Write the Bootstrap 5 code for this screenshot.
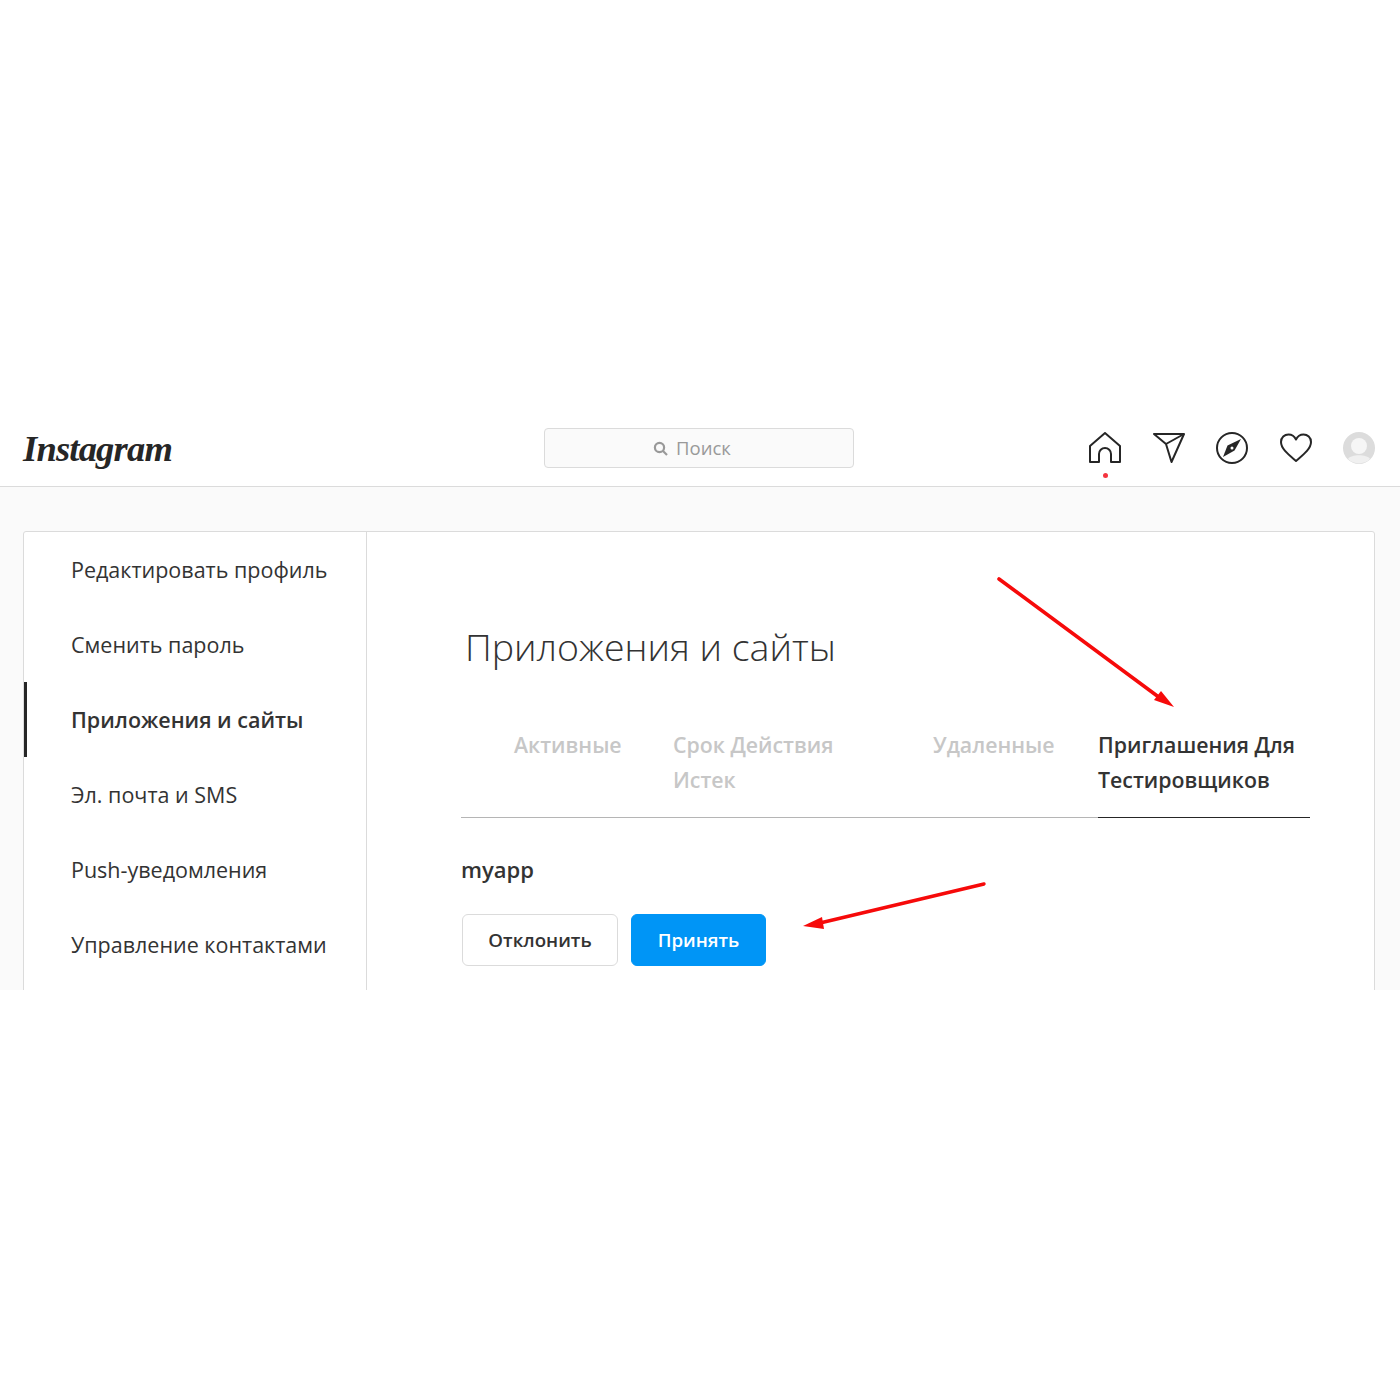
<!DOCTYPE html>
<html lang="ru">
<head>
  <meta charset="UTF-8" />
  <meta name="viewport" content="width=device-width, initial-scale=1.0" />
  <title>Instagram</title>
  <link href="https://cdn.jsdelivr.net/npm/bootstrap@5.3.0/dist/css/bootstrap.min.css" rel="stylesheet">
  <style>
    body {
      background: #fff;
      font-family: "Open Sans", "Noto Sans", sans-serif;
      color: #262626;
    }
    .shot {
      position: relative;
      margin-top: 416px;
      height: 574px;
      overflow: hidden;
    }
    .top-bar {
      height: 71px;
      padding: 0 25px 0 23px;
      background: #fff;
      border-bottom: 1px solid #dbdbdb;
    }
    .top-side {
      flex: 1 1 0;
    }
    .logo-text {
      font-family: "Liberation Serif", serif;
      font-style: italic;
      font-weight: 700;
      font-size: 36.5px;
      letter-spacing: -0.8px;
      line-height: 1;
      color: #262626;
      margin-top: -3px;
    }
    .search-box {
      width: 310px;
      height: 40px;
      margin-top: -6px;
      padding-right: 14px;
      background: #fafafa;
      border: 1px solid #dbdbdb;
      border-radius: 4px;
      color: #999;
      font-size: 18.5px;
    }
    .top-icons {
      gap: 31.5px;
      margin-top: -6px;
    }
    .top-icons svg { display: block; }
    .home-wrap { position: relative; }
    .home-dot {
      position: absolute;
      left: 14px;
      top: 41px;
      width: 5px;
      height: 5px;
      border-radius: 50%;
      background: #f5343f;
    }
    .page-bg {
      background: #fafafa;
      padding: 44px 25px 0 23px;
      height: 503px;
    }
    .settings-box {
      height: 600px;
      background: #fff;
      border: 1px solid #dbdbdb;
      border-radius: 3px;
    }
    .side-menu {
      width: 343px;
      flex: none;
      border-right: 1px solid #dbdbdb;
    }
    .side-menu .nav-link {
      height: 75px;
      padding: 2px 0 0 44px;
      display: flex;
      align-items: center;
      font-size: 21.5px;
      color: #333;
      border-left: 3px solid transparent;
    }
    .side-menu .nav-link.active-item {
      font-weight: 600;
      border-left-color: #262626;
    }
    .content-pane {
      padding: 0 64px 0 94px;
      flex: 1;
    }
    .pane-title {
      font-size: 37.5px;
      font-weight: 300;
      line-height: 44px;
      margin: 93px 0 0 4px;
      color: #333;
    }
    .tab-row {
      margin-top: 42px;
      height: 107px;
      border-bottom: 1px solid #b5b5b5;
      font-size: 21.3px;
      line-height: 35px;
      font-weight: 600;
      padding-top: 16px;
      color: #c7c7c7;
    }
    .tab-a { width: 212px; padding-left: 53px; }
    .tab-b { width: 260px; }
    .tab-c { width: 165px; }
    .tab-d {
      width: 212px;
      height: 107px;
      margin-top: -16px;
      padding-top: 16px;
      color: #333;
      border-bottom: 1px solid #262626;
    }
    .app-name {
      font-size: 22px;
      font-weight: 600;
      line-height: 30px;
      margin: 36px 0 0;
      color: #333;
    }
    .action-row {
      margin: 30px 0 0 1px;
      gap: 13px;
    }
    .action-row .btn {
      height: 52px;
      font-size: 18.7px;
      font-weight: 600;
      border-radius: 6px;
      padding: 1px 0 0;
    }
    .btn-decline {
      width: 156px;
      background: #fff;
      border: 1px solid #dbdbdb;
      color: #333;
    }
    .btn-accept {
      width: 135px;
      background: #0095f6;
      border: 1px solid #0095f6;
      color: #fff;
    }
    .arrow-layer {
      position: absolute;
      left: 0;
      top: 0;
      width: 1400px;
      height: 574px;
      pointer-events: none;
    }
  </style>
</head>
<body>
  <div class="shot">
    <header class="top-bar d-flex align-items-center">
      <div class="top-side">
        <div class="logo-text">Instagram</div>
      </div>
      <div class="search-box d-flex align-items-center justify-content-center gap-2">
        <svg width="15" height="15" viewBox="0 0 15 15" fill="none" stroke="#999" stroke-width="2.2"><circle cx="6.5" cy="6.5" r="4.6"/><path d="M10 10l4 4"/></svg>
        <span>Поиск</span>
      </div>
      <div class="top-side d-flex justify-content-end">
        <div class="top-icons d-flex align-items-center">
          <div class="home-wrap">
            <svg width="32" height="32" viewBox="0 0 32 32" fill="none" stroke="#262626" stroke-width="2" stroke-linejoin="round"><path d="M1 30V14L16 1l15 13v16h-9v-8a6 6 0 0 0-12 0v8z"/></svg>
            <span class="home-dot"></span>
          </div>
          <svg width="32" height="32" viewBox="0 0 32 32" fill="none" stroke="#262626" stroke-width="2" stroke-linejoin="round"><path d="M1 2h30L18.500 30 13 12z"/><path d="M13 12L31 2"/></svg>
          <svg width="32" height="32" viewBox="0 0 32 32" fill="none" stroke="#262626" stroke-width="2"><circle cx="16" cy="16" r="15"/><path fill="#262626" stroke="none" d="M7 25l4.500-11.500L25 7l-6.500 11.500z"/><circle cx="16" cy="16" r="1.500" fill="#fff" stroke="none"/></svg>
          <svg width="32" height="32" viewBox="0 0 32 32" fill="none" stroke="#262626" stroke-width="2" stroke-linejoin="round"><path d="M16 29C9 23 1 17 1 10c0-4.500 3.500-7.500 7.500-7.500 3.300 0 6 1.800 7.500 5 1.500-3.200 4.200-5 7.500-5 4 0 7.500 3 7.500 7.500 0 7-8 13-15 19z"/></svg>
          <svg width="32" height="32" viewBox="0 0 32 32"><circle cx="16" cy="16" r="16" fill="#dcdcdc"/><circle cx="16" cy="14" r="8" fill="#f6f6f6"/><path d="M5 27c3-5 19-5 22 0a16 16 0 0 1-22 0z" fill="#f0f0f0"/></svg>
        </div>
      </div>
    </header>

    <div class="page-bg">
      <div class="settings-box d-flex">
        <nav class="side-menu nav flex-column flex-nowrap">
          <a class="nav-link" href="#">Редактировать профиль</a>
          <a class="nav-link" href="#">Сменить пароль</a>
          <a class="nav-link active-item" href="#">Приложения и сайты</a>
          <a class="nav-link" href="#">Эл. почта и SMS</a>
          <a class="nav-link" href="#">Push-уведомления</a>
          <a class="nav-link" href="#">Управление контактами</a>
        </nav>
        <main class="content-pane">
          <h1 class="pane-title">Приложения и сайты</h1>
          <div class="tab-row d-flex">
            <div class="tab-a">Активные</div>
            <div class="tab-b">Срок Действия<br>Истек</div>
            <div class="tab-c">Удаленные</div>
            <div class="tab-d">Приглашения Для<br>Тестировщиков</div>
          </div>
          <p class="app-name">myapp</p>
          <div class="action-row d-flex">
            <button class="btn btn-decline">Отклонить</button>
            <button class="btn btn-accept">Принять</button>
          </div>
        </main>
      </div>
    </div>

    <svg class="arrow-layer" viewBox="0 0 1400 574">
      <path d="M999 163L1160 282" fill="none" stroke="#f60a0a" stroke-width="3.6" stroke-linecap="round"/>
      <path d="M1174 291L1161 275L1154 284z" fill="#f60a0a"/>
      <path d="M984 468L820 507" fill="none" stroke="#f60a0a" stroke-width="3.4" stroke-linecap="round"/>
      <path d="M803 510L822 501L824 513z" fill="#f60a0a"/>
    </svg>
  </div>

  <script src="https://cdn.jsdelivr.net/npm/bootstrap@5.3.0/dist/js/bootstrap.bundle.min.js"></script>
</body>
</html>
